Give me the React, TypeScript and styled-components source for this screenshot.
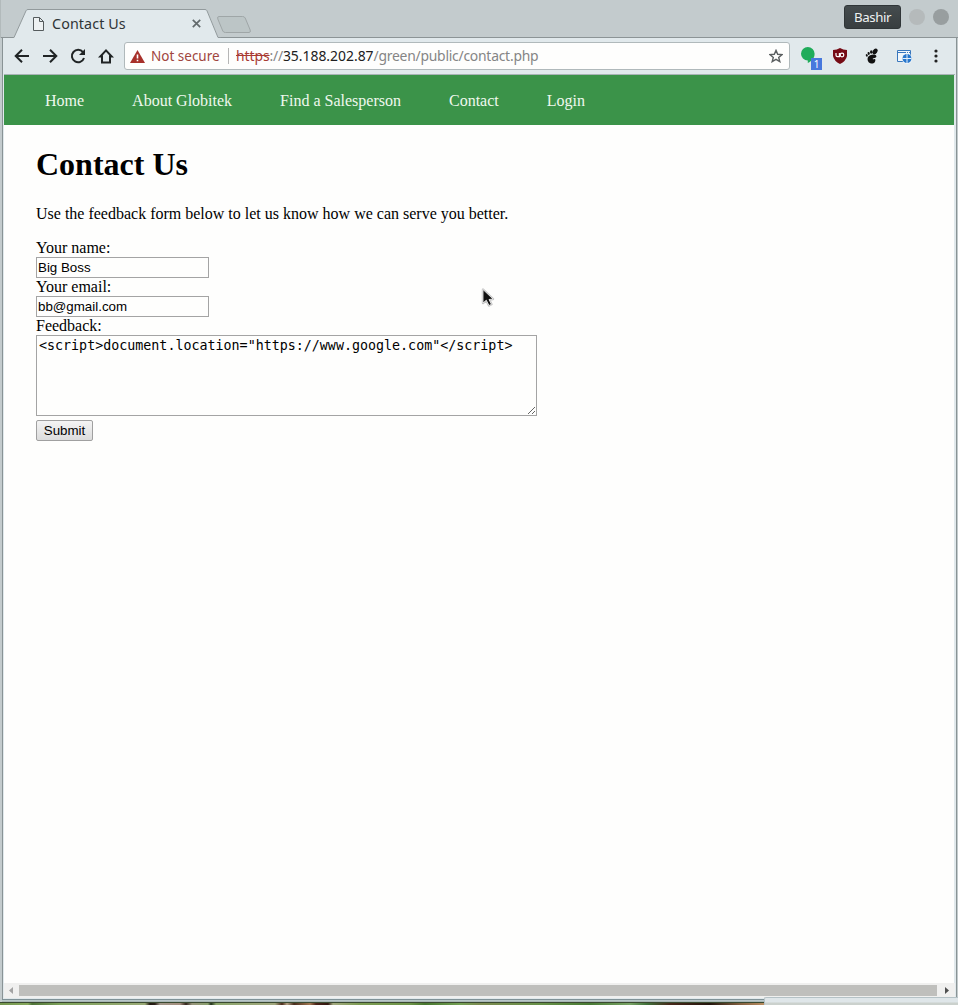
import React from "react";
import styled, { createGlobalStyle } from "styled-components";

const Global = createGlobalStyle`
  * { box-sizing: border-box; }
  body { margin: 0; overflow: hidden; background: #c3cbcd; }
`;

const Desktop = styled.div`
  position: relative;
  width: 958px;
  height: 1005px;
  display: flex;
  flex-direction: column;
  overflow: hidden;
  background: #c3cbcd;
  font-family: "Noto Sans", sans-serif;
`;

const TitleBar = styled.header`
  height: 38px;
  flex: none;
  display: flex;
  align-items: flex-start;
  padding-left: 14px;
  border-left: 1px solid #b2babb;
  background: linear-gradient(#c3cbcd 37px, #8c9496 37px);
`;

const Tab = styled.div`
  position: relative;
  width: 204px;
  height: 29px;
  margin-top: 9px;
  display: flex;
  align-items: center;
  padding: 0 18px 0 18px;
`;

const TabShape = styled.svg`
  position: absolute;
  left: -2px;
  top: 0;
`;

const TabIcon = styled.svg`
  position: relative;
  flex: none;
`;

const TabTitle = styled.span`
  position: relative;
  flex: 1;
  margin-left: 8px;
  font-size: 14.3px;
  line-height: 20px;
  letter-spacing: 0.1px;
  color: #2f3436;
`;

const NewTab = styled.svg`
  margin: 14px 0 0 -3px;
`;

const WindowControls = styled.div`
  margin-left: auto;
  display: flex;
  align-items: center;
  margin-top: 5px;
  padding-right: 9px;
  gap: 8px;
`;

const UserButton = styled.button`
  width: 57px;
  height: 24px;
  padding: 0;
  border: 1px solid #303638;
  border-radius: 3px;
  background: linear-gradient(#454c4e, #383e40);
  color: #eef1f1;
  font: 13.3px/20px "Noto Sans", sans-serif;
  letter-spacing: -0.45px;
`;

const ControlDot = styled.span<{ $color: string }>`
  width: 16px;
  height: 16px;
  border-radius: 50%;
  background: ${(p) => p.$color};
`;

const Frame = styled.div`
  height: 961px;
  flex: none;
  display: flex;
  flex-direction: column;
  margin: 0 1px 0 2px;
  border: 1px solid #899395;
  border-top: 0;
  border-bottom: 0;
  background: #e1e9ec;
  padding: 0 1px 0 1px;
`;

const Toolbar = styled.div`
  height: 37px;
  flex: none;
  display: flex;
  align-items: center;
  border-bottom: 1px solid #a8b3b5;
  padding: 0 0 0 8px;
`;

const NavIcon = styled.svg`
  width: 20px;
  height: 20px;
  margin-right: 8px;
  flex: none;
  fill: none;
  stroke: #202425;
  stroke-width: 2;
`;

const AddressBar = styled.div`
  width: 666px;
  height: 28px;
  flex: none;
  display: flex;
  align-items: center;
  padding: 0 6px 0 5px;
  border: 1px solid #b0b9bb;
  border-radius: 3px;
  background: #fefefd;
  font-size: 14px;
  line-height: 20px;
  white-space: pre;
`;

const Security = styled.span`
  width: 77px;
  margin-left: 6px;
  font-size: 13.5px;
  color: #a0453d;
`;

const Divider = styled.span`
  width: 1px;
  height: 16px;
  margin-right: 7px;
  background: #b6b6b6;
`;

const Url = styled.span`
  flex: 1;
  color: #858585;
  font-size: 13.9px;
  letter-spacing: -0.24px;
  s { color: #a83a32; letter-spacing: -0.05px; }
  b { font-weight: 400; color: #202020; letter-spacing: 0; }
`;

const Extensions = styled.div`
  display: flex;
  align-items: center;
  margin-left: 10px;
`;

const ExtIcon = styled.svg<{ $gap?: number }>`
  flex: none;
  margin-right: ${(p) => p.$gap ?? 0}px;
`;

const ChatExtension = styled.div`
  position: relative;
  width: 32px;
  height: 22px;
`;

const Badge = styled.span`
  position: absolute;
  left: 11px;
  top: 13px;
  width: 11px;
  height: 12px;
  background: #4778dd;
  color: #fff;
  font-size: 10px;
  line-height: 12px;
  text-align: center;
`;

const Page = styled.main`
  width: 950px;
  height: 908px;
  flex: none;
  background: #fefefd;
  color: #000;
  font: 16px/18px "Liberation Serif", serif;
`;

const SiteNav = styled.nav`
  height: 50px;
  display: flex;
  align-items: center;
  gap: 48px;
  padding: 1px 0 0 41px;
  background: #3b9349;
`;

const NavLink = styled.a`
  color: #eff8ee;
`;

const Content = styled.section`
  padding: 21px 32px;
`;

const Heading = styled.h1`
  margin: 0;
  font-size: 32px;
  line-height: 37px;
`;

const Intro = styled.p`
  margin: 22px 0 16px;
`;

const Form = styled.form`
  display: flex;
  flex-direction: column;
  align-items: flex-start;
`;

const Label = styled.label`
  height: 18px;
`;

const TextInput = styled.input`
  width: 173px;
  height: 21px;
  padding: 1px;
  border: 1px solid #a4a4a4;
  border-radius: 0;
  background: #fefefd;
  color: #000;
  outline: 0;
  font: 13.333px "Liberation Sans", sans-serif;
`;

const TextArea = styled.textarea`
  width: 501px;
  height: 81px;
  padding: 2px;
  border: 1px solid #a4a4a4;
  border-radius: 0;
  background: #fefefd;
  color: #000;
  outline: 0;
  font: 13.333px "DejaVu Sans Mono", monospace;
`;

const Submit = styled.button`
  width: 57px;
  height: 21px;
  margin-top: 4px;
  padding: 0;
  border: 1px solid #a0a0a0;
  border-radius: 2px;
  background: linear-gradient(#f4f4f4, #dcdcdc);
  color: #000;
  font: 13.333px "Liberation Sans", sans-serif;
`;

const Scrollbar = styled.div`
  height: 15px;
  flex: none;
  display: flex;
  align-items: center;
  background: #f0f0ef;
`;

const ScrollArrow = styled.svg<{ $offset?: number }>`
  width: 15px;
  height: 15px;
  flex: none;
  margin-left: ${(p) => p.$offset ?? 0}px;
`;

const Thumb = styled.div`
  width: 918px;
  height: 11px;
  background: #bfbfbc;
`;

const BottomEdge = styled.div`
  height: 3px;
  flex: none;
  margin: 0 1px 0 2px;
  border-top: 1px solid #7f9297;
  background: linear-gradient(#b9c7ca 1px, #a9b7b6 1px);
`;

const Wallpaper = styled.div`
  flex: 1;
  border-top: 1px solid #3a4a30;
  background: linear-gradient(90deg, #73954e 0, #86a85c 28px, #4f7438 32px, #7da25a 60px, #9aaa76 145px,
    #20170f 150px, #2b2018 155px, #a09688 160px, #a58f7e 180px, #33251c 186px, #98967c 192px, #8aa16e 208px,
    #20301a 211px, #8aa56b 216px, #a2a87e 275px, #4c2b1b 282px, #b5a384 287px, #492d1d 294px, #a37851 310px,
    #4b2419 316px, #32180f 328px, #a3aa80 333px, #7c9c52 360px, #6d9448 410px, #47772f 425px, #74a155 460px,
    #7c8b50 480px, #679148 540px, #497b35 590px, #79a466 630px, #3f713a 647px, #48281a 670px, #24160d 710px,
    #83603f 740px, #ba8e62 764px);
`;

const StatusPopup = styled.div`
  position: absolute;
  left: 764px;
  top: 997px;
  width: 194px;
  height: 8px;
  border-top: 1px solid #b5c2c6;
  border-left: 1px solid #b5c2c6;
  border-top-left-radius: 2px;
  background: linear-gradient(#dfe6e9 4px, #cbd1cd 5px);
`;

const Pointer = styled.svg`
  position: absolute;
  left: 481px;
  top: 288px;
`;

const NAV = ["Home", "About Globitek", "Find a Salesperson", "Contact", "Login"];

export default function App() {
  return (
    <Desktop>
      <Global />
      <TitleBar>
        <Tab>
          <TabShape width="208" height="29" viewBox="0 0 208 29">
            <path d="M0 29 L1 28.5 L13 1.5 Q13.5 .5 15 .5 H192 Q193.5 .5 194 1.5 L205 28 L206 29Z" fill="#e1e9ec" />
            <path d="M0 28.5 H1 L13 1.8 Q13.5 .5 15 .5 H192 Q193.5 .5 194 1.8 L205 28.5 H208" fill="none" stroke="#929a9c" />
          </TabShape>
          <TabIcon width="11" height="14" viewBox="0 0 11 14" fill="#edf1f2" stroke="#555b5d">
            <path d="M.5.5H6.5L10.5 4.5V13.5H.5Z M6.5.5V4.5H10.5" />
          </TabIcon>
          <TabTitle>Contact Us</TabTitle>
          <TabIcon width="9" height="9" viewBox="0 0 9 9" stroke="#626a6c" strokeWidth="1.7">
            <path d="M.8.8L8.2 8.2M8.2.8L.8 8.2" />
          </TabIcon>
        </Tab>
        <NewTab width="37" height="20" viewBox="0 0 37 20">
          <path d="M3 2.5H26.5Q28.5 2.5 29.2 4L34.2 16Q35 18.5 33 18.5H9.5Q7.5 18.5 6.8 17L1.8 5Q1 2.5 3 2.5Z" fill="#bcc5c6" stroke="#9fa6a7" />
        </NewTab>
        <WindowControls>
          <UserButton>Bashir</UserButton>
          <ControlDot $color="#b5babb" />
          <ControlDot $color="#989e9f" />
        </WindowControls>
      </TitleBar>

      <Frame>
        <Toolbar>
          <NavIcon viewBox="0 0 20 20"><path d="M17 10H4M10 3.7L3.7 10L10 16.3" /></NavIcon>
          <NavIcon viewBox="0 0 20 20"><path d="M3 10H16M10 3.7L16.3 10L10 16.3" /></NavIcon>
          <NavIcon viewBox="0 0 20 20">
            <path d="M15 6.2A6.2 6.2 0 1 0 16 12" />
            <path d="M17 3V9H11Z" fill="#202425" stroke="none" />
          </NavIcon>
          <NavIcon viewBox="0 0 20 20"><path d="M4.3 10.5H6V16.5H14V10.5H15.7L10 4.4Z" /></NavIcon>
          <AddressBar>
            <svg width="15" height="13" viewBox="0 0 15 13">
              <path d="M7.5 0L15 13H0Z" fill="#a7302a" />
              <path d="M7.5 4.5V8.5M7.5 9.7V11.3" stroke="#fff" strokeWidth="1.6" />
            </svg>
            <Security>Not secure</Security>
            <Divider />
            <Url><s>https</s>://<b>35.188.202.87</b>/green/public/contact.php</Url>
            <svg width="14" height="14" viewBox="0 0 14 14" fill="none" stroke="#5b5f60" strokeWidth="1.4">
              <path d="M7 1.4L8.7 5.3L13 5.6L9.7 8.4L10.8 12.6L7 10.3L3.2 12.6L4.3 8.4L1 5.6L5.3 5.3Z" />
            </svg>
          </AddressBar>
          <Extensions>
            <ChatExtension>
              <svg width="16" height="20" viewBox="0 0 16 20">
                <path d="M7.8 2A6.8 6.8 0 0 0 7.8 15.6V18C12 16 14.6 13 14.6 8.8A6.8 6.8 0 0 0 7.8 2Z" fill="#1fac5a" />
              </svg>
              <Badge>1</Badge>
            </ChatExtension>
            <ExtIcon $gap={17} width="16" height="16" viewBox="0 0 16 16">
              <path d="M8 0Q11 2 15 2V8Q14 13 8 16Q2 13 1 8V2Q5 2 8 0Z" fill="#760b15" />
              <path d="M4 5V7.2Q4 8.6 5.5 8.6H7.4V5" fill="none" stroke="#fff" strokeWidth="1.2" />
              <circle cx="10" cy="7" r="1.8" fill="none" stroke="#fff" strokeWidth="1.2" />
            </ExtIcon>
            <ExtIcon $gap={17} width="15" height="16" viewBox="0 0 15 16" fill="#111">
              <ellipse cx="10" cy="3.4" rx="2.2" ry="3.1" transform="rotate(35 10 3.4)" />
              <ellipse cx="6.2" cy="4" rx="1.2" ry="1.7" />
              <ellipse cx="3.7" cy="5.4" rx="1.1" ry="1.5" transform="rotate(-15 3.7 5.4)" />
              <ellipse cx="1.8" cy="7.4" rx="1" ry="1.3" transform="rotate(-25 1.8 7.4)" />
              <path d="M2.8 9.4C4 6.5 11.2 5.4 11.4 8.2C11.4 10.4 7.6 9.6 7.8 11C8.1 12 9.6 10.4 10.3 11.5C10.8 14 8.5 16 6.3 15.5C3.3 15 2 12 2.8 9.4Z" />
            </ExtIcon>
            <ExtIcon $gap={22} width="15" height="15" viewBox="0 0 15 15">
              <path d="M.5 1.5H13.5V12.5H.5Z" fill="#f2f7fb" stroke="#3977bd" />
              <path d="M1 3.5H9M10 3.5H11M12 3.5H13" stroke="#3977bd" />
              <circle cx="10" cy="9.5" r="5.2" fill="#f2f7fb" />
              <circle cx="10" cy="9.5" r="4.5" fill="#2877cc" />
              <path d="M10 5V14M5.5 9.5H14.5" stroke="#e7f1fa" strokeWidth="1" />
            </ExtIcon>
            <ExtIcon width="4" height="14" viewBox="0 0 4 14" fill="#222">
              <circle cx="2" cy="2" r="1.6" /><circle cx="2" cy="7" r="1.6" /><circle cx="2" cy="12" r="1.6" />
            </ExtIcon>
          </Extensions>
        </Toolbar>

        <Page>
          <SiteNav>{NAV.map((n) => <NavLink key={n}>{n}</NavLink>)}</SiteNav>
          <Content>
            <Heading>Contact Us</Heading>
            <Intro>Use the feedback form below to let us know how we can serve you better.</Intro>
            <Form>
              <Label htmlFor="name">Your name:</Label>
              <TextInput id="name" defaultValue="Big Boss" />
              <Label htmlFor="email">Your email:</Label>
              <TextInput id="email" defaultValue="bb@gmail.com" />
              <Label htmlFor="feedback">Feedback:</Label>
              <TextArea id="feedback" spellCheck={false} defaultValue={'<script>document.location="https://www.google.com"</script>'} />
              <Submit type="button">Submit</Submit>
            </Form>
          </Content>
        </Page>
        <Scrollbar>
          <ScrollArrow viewBox="0 0 15 15"><path d="M9 4V11L5 7.5Z" fill="#a3a3a3" /></ScrollArrow>
          <Thumb />
          <ScrollArrow $offset={2} viewBox="0 0 15 15"><path d="M6 4V11L10 7.5Z" fill="#505050" /></ScrollArrow>
        </Scrollbar>
      </Frame>
      <BottomEdge />
      <Wallpaper />
      <StatusPopup />
      <Pointer width="15" height="21" viewBox="0 0 15 21">
        <path d="M2 1.5L2 15L5.3 12.2L8 17.5L10.4 16.3L8 11.5L12 11Z" fill="#111" stroke="#c4c4c4" strokeWidth="2.4" strokeLinejoin="round" />
        <path d="M2 1.5L2 15L5.3 12.2L8 17.5L10.4 16.3L8 11.5L12 11Z" fill="#111" stroke="#f6f6f6" strokeWidth=".8" />
      </Pointer>
    </Desktop>
  );
}
